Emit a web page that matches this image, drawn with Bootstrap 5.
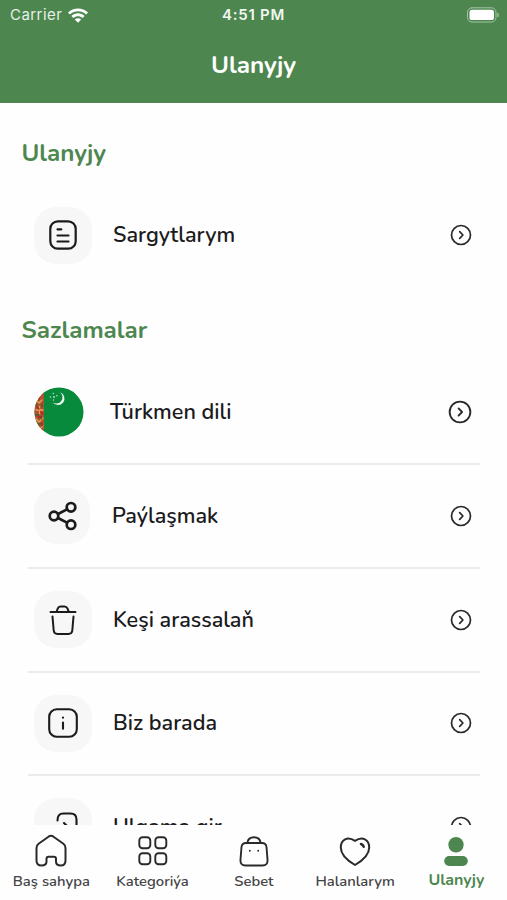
<!DOCTYPE html>
<html lang="tk">
<head>
<meta charset="utf-8">
<meta name="viewport" content="width=device-width, initial-scale=1">
<title>Ulanyjy</title>
<link href="https://cdn.jsdelivr.net/npm/bootstrap@5.3.0/dist/css/bootstrap.min.css" rel="stylesheet">
<style>
:root{--brand:#4d874f}
body{font-family:Nunito,Lato,"Open Sans",sans-serif;color:#1b1b1d;background:#fefefe}
svg{display:block;flex:none;fill:none;stroke:currentColor;stroke-linecap:round;stroke-linejoin:round}
.solid{fill:currentColor;stroke:none}
.app-header{height:103px;background:var(--brand)}
.status-bar{height:30px;padding:0 8px 0 10px;font:500 15px/30px Inter,sans-serif}
.status-bar>*{flex:1 1 0}
.carrier{font-weight:400;letter-spacing:.45px;color:#e6f0e6}
.carrier svg{color:#fff;margin-left:6px}
.clock{font-weight:600;letter-spacing:.75px;color:#f1f7f1;padding-right:2px}
.app-title{font-size:24.300px;line-height:32px;font-weight:700;padding-top:19px}
.section-title{font-size:24.200px;line-height:32px;font-weight:700;color:var(--brand);margin-left:21.500px}
.first-title{margin-top:35px}
.second-title{margin-top:21px}
.settings-row{height:103.800px;margin:0 27px 0 28px;padding:0 8px 0 6px;font-size:21.600px;line-height:30px;font-weight:600;border-bottom:2px solid #ebebeb}
.orders-row{height:118px;margin-top:6px;border-bottom:0}
.language-row{height:104px;margin-top:14px}
.exit-row{height:101px;border-bottom:0}
.flag{width:50px;height:50px}
.tile{width:58px;height:57px;border-radius:22px;background:#f7f7f7}
.share-tile{width:56px;height:56px;padding-left:2px}
.item-label{margin-left:21px;white-space:nowrap}
.language-row .item-label{margin-left:26px}
.share-row .item-label{margin-left:22px}
.go{margin-left:auto;color:#29292b}
.tab-bar{height:75px;padding-left:.7px;background:#fefefe;font-size:14.800px;line-height:20px;font-weight:600;color:#444446}
.tab-item{width:101.300px;padding-top:9px}
.tab-item svg{color:#2a2a2c}
.tab-item span{margin-top:3px}
.tab-item.tab-active,.tab-active svg{color:var(--brand)}
.tab-active{font-weight:700;font-size:16px}
.tab-active span{margin-top:2px}
</style>
</head>
<body class="vh-100 overflow-hidden d-flex flex-column">
<svg class="d-none">
  <symbol id="chevron" viewBox="0 0 22 22"><circle cx="11" cy="11" r="9.500"/><path d="M9.700 7.700 12.900 11 9.700 14.300"/></symbol>
</svg>
<header class="app-header text-white flex-shrink-0">
  <div class="status-bar d-flex align-items-center">
    <div class="carrier d-flex align-items-center">Carrier
      <svg class="solid" width="20" height="15" viewBox="0 0 20 15"><path d="M0 4.400C5.600-.9 14.400-.9 20 4.400L18.100 6.500C13.600 2.200 6.400 2.200 1.900 6.500zM3.400 7.900C7.100 4.400 12.900 4.400 16.600 7.900L14.600 10C12 7.600 8 7.600 5.400 10zM6.800 11.400C8.600 9.700 11.400 9.700 13.200 11.400L10 14.800z"/></svg>
    </div>
    <div class="clock text-center">4:51 PM</div>
    <div class="d-flex justify-content-end">
      <svg width="33" height="16" viewBox="0 0 33 16"><rect x="1.500" y=".8" width="28.500" height="14.200" rx="4.500" stroke="#a6c3a7"/><rect x="3.500" y="2.800" width="24.500" height="10.200" rx="2.600" fill="#fff" stroke="none"/><path d="M32 6.600v2.800" stroke="#a6c3a7" stroke-width="1.300"/></svg>
    </div>
  </div>
  <h1 class="app-title text-center mb-0">Ulanyjy</h1>
</header>

<main class="flex-grow-1 overflow-hidden">
  <h2 class="section-title first-title mb-0">Ulanyjy</h2>
  <div class="settings-row orders-row d-flex align-items-center">
    <span class="tile d-flex align-items-center justify-content-center"><svg width="30" height="30" viewBox="0 0 30 30" stroke-width="2.200"><rect x="2.300" y="1.300" width="25.400" height="27.400" rx="7.500"/><path d="M9.500 9.300h3.800M9.500 15.500h11M9.500 21.500h11"/></svg></span>
    <span class="item-label">Sargytlarym</span>
    <svg class="go" width="22" height="22" stroke-width="1.700"><use href="#chevron"/></svg>
  </div>

  <h2 class="section-title second-title mb-0">Sazlamalar</h2>
  <div class="settings-row language-row d-flex align-items-center">
    <svg class="flag" viewBox="0 0 50 50" stroke="none">
      <clipPath id="disc"><circle cx="25" cy="25" r="24.500"/></clipPath>
      <g clip-path="url(#disc)" stroke="none">
        <path fill="#078a3c" d="M0 0h50v50H0z"/>
        <path fill="#b5502f" d="M0 0h10v50H0z"/>
        <g fill="none" stroke-width="1.300">
          <path stroke="#dfa45a" d="M2 13l3 3 3-3M1 31l4 4 4-4M3 39l3 3 3-3"/>
          <path stroke="#dfa45a" d="M2 23h7M5.500 19.500v7"/>
          <path stroke="#2e6b38" d="M1 18h2M8 17v3M1.500 28h3M7.500 29v3M4 37h3"/>
          <path stroke="#b51f1f" d="M5 9v3M3 20l2 2M7 25l2 2M4 30h3M8 36v3"/>
        </g>
        <path fill="#f4faf5" d="M26 5.200A6.600 6.600 0 1 1 18.500 15.300A5.300 5.300 0 1 0 26 5.200z"/>
        <g fill="#b9dfc4"><circle cx="19.300" cy="6.500" r=".8"/><circle cx="16.500" cy="10" r=".8"/><circle cx="20" cy="10" r=".9"/><circle cx="19.500" cy="13" r=".7"/><circle cx="22.800" cy="8.800" r=".8"/></g>
      </g>
    </svg>
    <span class="item-label">Türkmen dili</span>
    <svg class="go" width="24" height="24" stroke-width="1.700"><use href="#chevron"/></svg>
  </div>
  <div class="settings-row share-row d-flex align-items-center">
    <span class="tile share-tile d-flex align-items-center justify-content-center"><svg width="30" height="30" viewBox="0 0 30 30" stroke-width="2.700"><circle cx="6" cy="15" r="4.300"/><circle cx="23" cy="6.300" r="4.300"/><circle cx="23" cy="23.700" r="4.300"/><path d="M10 13 19 8.400M10 17l9 4.600"/></svg></span>
    <span class="item-label">Paýlaşmak</span>
    <svg class="go" width="22" height="22" stroke-width="1.700"><use href="#chevron"/></svg>
  </div>
  <div class="settings-row d-flex align-items-center">
    <span class="tile d-flex align-items-center justify-content-center"><svg width="30" height="32" viewBox="0 0 30 32" stroke-width="2"><path d="M2.500 8h25M8.700 7.500 9.800 4.400Q10.500 2.400 12.500 2.400H16.500Q18.500 2.400 19.400 4.400L20.700 7.500M4.500 12.500 5.700 26.500Q6.100 30 9.500 30H20.500Q23.900 30 24.300 26.500L25.500 12.500"/></svg></span>
    <span class="item-label">Keşi arassalaň</span>
    <svg class="go" width="22" height="22" stroke-width="1.700"><use href="#chevron"/></svg>
  </div>
  <div class="settings-row d-flex align-items-center">
    <span class="tile d-flex align-items-center justify-content-center"><svg width="30" height="30" viewBox="0 0 30 30" stroke-width="2.100"><rect x="1.200" y="1.200" width="27.600" height="27.600" rx="7.500"/><path d="M15 14.500v6.200M15 9.600v.2"/></svg></span>
    <span class="item-label">Biz barada</span>
    <svg class="go" width="22" height="22" stroke-width="1.700"><use href="#chevron"/></svg>
  </div>
  <div class="settings-row exit-row d-flex align-items-center">
    <span class="tile d-flex align-items-center justify-content-center"><svg width="30" height="30" viewBox="0 0 30 30" stroke-width="2.100"><path d="M9.500 8.500C9.500 4 11 1.500 15.500 1.500H22.500Q28.500 1.500 28.500 7.500V22.500Q28.500 28.500 22.500 28.500H15.500Q9.500 28.500 9.500 22M1.500 15H20M16 11l4 4-4 4"/></svg></span>
    <span class="item-label">Ulgama gir</span>
    <svg class="go" width="22" height="22" stroke-width="1.700"><use href="#chevron"/></svg>
  </div>
</main>

<nav class="tab-bar d-flex flex-shrink-0">
  <div class="tab-item d-flex flex-column align-items-center">
    <svg width="34" height="34" viewBox="0 0 34 34" stroke-width="2"><path d="M4.600 9.800 14.500 2.700Q17 1 19.500 2.700L29.400 9.800Q31.500 11.300 31.500 14V26.500Q31.500 31.500 26.800 31.500Q22 31.500 22 27.500V24.700Q22 22.700 20 22.700H14.500Q12.500 22.700 12.500 24.700V27.500Q12.500 31.500 7.500 31.500Q2.500 31.500 2.500 26.500V14Q2.500 11.300 4.600 9.800z"/></svg>
    <span>Baş sahypa</span>
  </div>
  <div class="tab-item d-flex flex-column align-items-center">
    <svg width="34" height="34" viewBox="0 0 34 34" stroke-width="1.900"><rect x="3.300" y="3.300" width="11" height="11" rx="3.300"/><rect x="19.300" y="3.300" width="11" height="11" rx="3.300"/><rect x="3.300" y="19.300" width="11" height="11" rx="3.300"/><rect x="19.300" y="19.300" width="11" height="11" rx="3.300"/></svg>
    <span>Kategoriýa</span>
  </div>
  <div class="tab-item d-flex flex-column align-items-center">
    <svg width="34" height="34" viewBox="0 0 34 34" stroke-width="1.900"><path d="M9 9H25Q29 9 29.500 13L30.500 25.500Q31 31.500 25.500 31.500H8.500Q3 31.500 3.500 25.500L4.500 13Q5 9 9 9zM10.300 8.800Q11.300 3.200 17 3.200Q22.700 3.200 23.700 8.800M12.800 16.700v.1M21.200 16.700v.1"/></svg>
    <span>Sebet</span>
  </div>
  <div class="tab-item d-flex flex-column align-items-center">
    <svg width="34" height="34" viewBox="0 0 34 34" stroke-width="2"><path d="M17 31C11 27.500 2.800 21.500 2.800 13.500C2.800 5.500 9.500 1.800 17 6.800C24.500 1.800 31.200 5.500 31.200 13.500C31.200 21.500 23 27.500 17 31z"/><path d="M23 10Q25 10.700 25.700 12.700" stroke-width="2.500"/></svg>
    <span>Halanlarym</span>
  </div>
  <div class="tab-item tab-active d-flex flex-column align-items-center">
    <svg class="solid" width="34" height="34" viewBox="0 0 34 34"><circle cx="17" cy="10.700" r="7.700"/><rect x="5.200" y="22" width="23.600" height="10" rx="5"/></svg>
    <span>Ulanyjy</span>
  </div>
</nav>
<script src="https://cdn.jsdelivr.net/npm/bootstrap@5.3.0/dist/js/bootstrap.bundle.min.js"></script>
</body>
</html>
